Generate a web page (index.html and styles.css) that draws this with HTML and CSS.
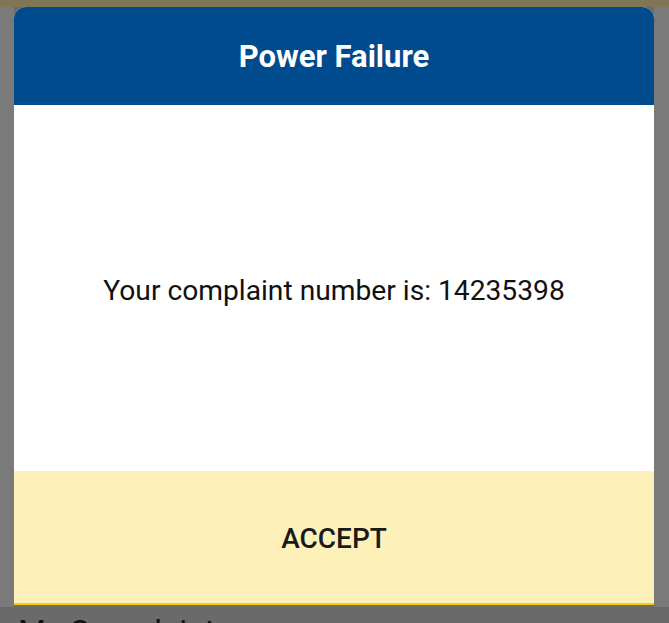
FILE: index.html
```html
<!DOCTYPE html>
<html>
<head>
<meta charset="utf-8">
<link rel="stylesheet" href="styles.css">
</head>
<body>
<div class="topstrip"></div>
<div class="dialog">
  <div class="dialog-header">Power Failure</div>
  <div class="dialog-body">Your complaint number is: 14235398</div>
  <div class="dialog-footer">ACCEPT</div>
</div>
<div class="below">My Complaints</div>
</body>
</html>
```
FILE: styles.css
```css
html, body {
  margin: 0;
  padding: 0;
  height: 100%;
  overflow: hidden;
}
body {
  background: #6a6a6a;
  font-family: Roboto, "Liberation Sans", sans-serif;
  position: relative;
}
.topstrip {
  height: 7px;
  background: #7e7654;
}
.dialog {
  margin: 0 15px 0 14px;
  border-radius: 12px 12px 0 0;
  overflow: hidden;
  background: #fff;
}
.dialog-header {
  height: 98px;
  background: #004b8d;
  color: #fff;
  font-weight: 700;
  font-size: 31px;
  display: flex;
  align-items: center;
  justify-content: center;
}
.dialog-body {
  height: 366px;
  display: flex;
  align-items: center;
  justify-content: center;
  font-size: 28.2px;
  color: #111;
  padding-top: 4px;
  box-sizing: border-box;
}
.dialog-footer {
  height: 134px;
  background: #fdf1b9;
  border-bottom: 2px solid #ffcc00;
  display: flex;
  align-items: center;
  justify-content: center;
  font-size: 28px;
  font-weight: 500;
  color: #1a1a1a;
  padding-top: 3px;
  box-sizing: border-box;
}
.below {
  padding: 8px 0 0 18px;
  font-size: 32px;
  color: #111;
  line-height: 36px;
}
body::before {
  content: "";
  position: absolute;
  left: 0;
  top: 7px;
  width: 14px;
  height: 600px;
  background: #7a7a7a;
  z-index: -1;
}
body::after {
  content: "";
  position: absolute;
  right: 0;
  top: 7px;
  width: 15px;
  height: 600px;
  background: #7a7a7a;
  z-index: -1;
}
```
